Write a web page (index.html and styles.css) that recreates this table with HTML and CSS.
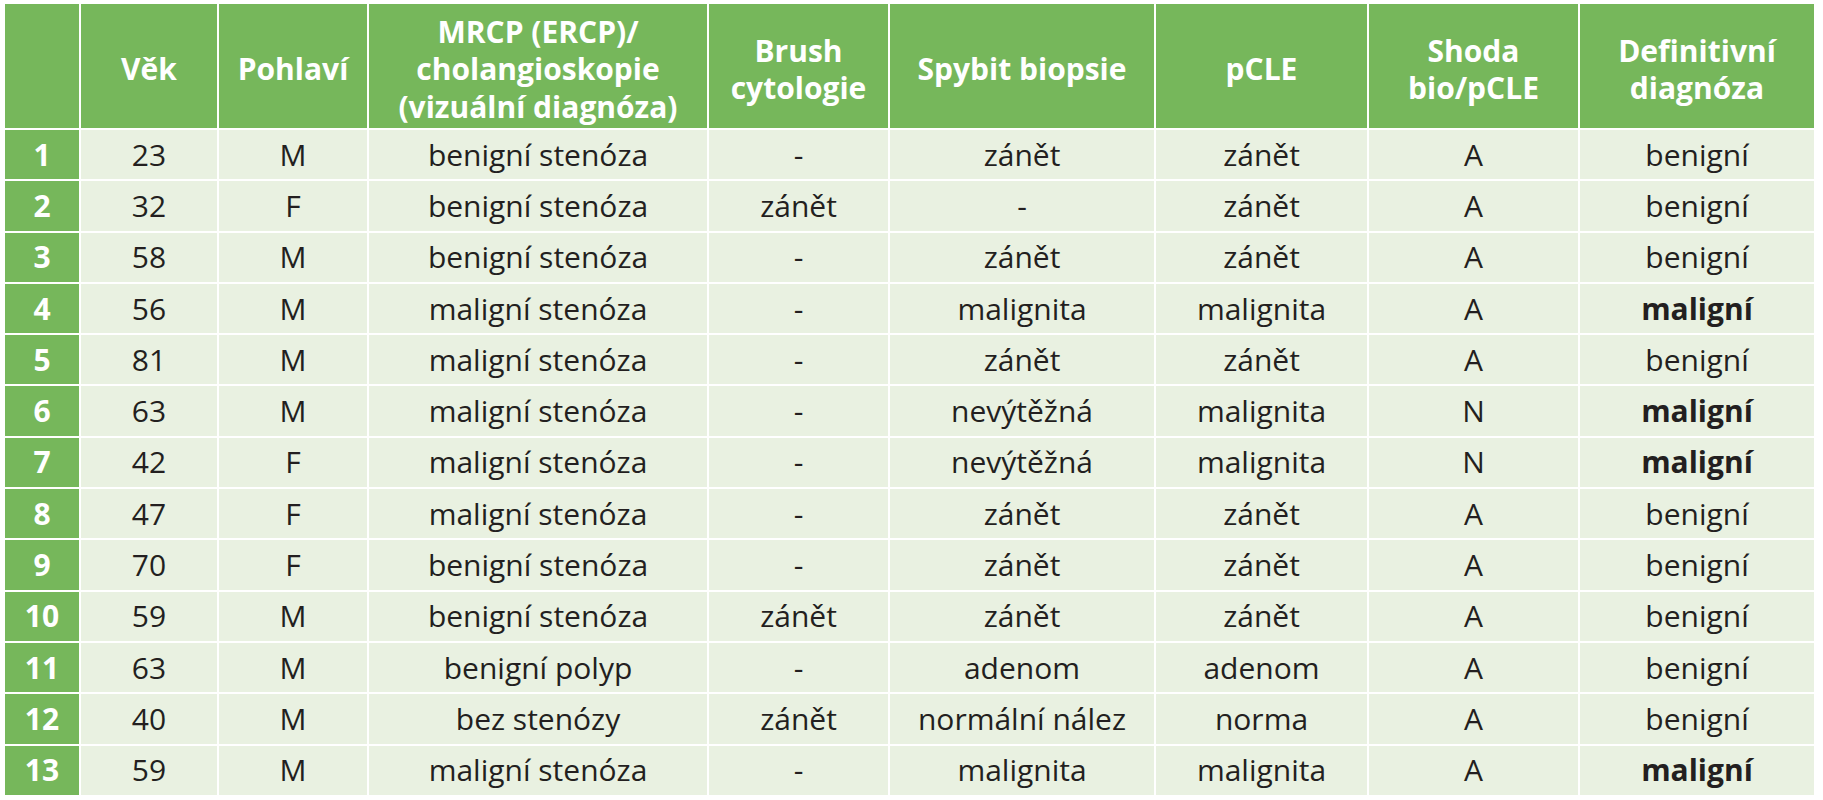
FILE: index.html
```html
<!DOCTYPE html>
<html lang="cs">
<head>
<meta charset="utf-8">
<title>Tabulka</title>
<link rel="stylesheet" href="styles.css">
</head>
<body>
<table class="data">
  <colgroup>
    <col class="c-num"><col class="c-age"><col class="c-sex"><col class="c-mrcp"><col class="c-brush"><col class="c-spy"><col class="c-pcle"><col class="c-shoda"><col class="c-def">
  </colgroup>
  <thead>
    <tr class="head">
      <th></th>
      <th>Věk</th>
      <th>Pohlaví</th>
      <th>MRCP (ERCP)/<br>cholangioskopie<br>(vizuální diagnóza)</th>
      <th>Brush<br>cytologie</th>
      <th>Spybit biopsie</th>
      <th>pCLE</th>
      <th>Shoda<br>bio/pCLE</th>
      <th>Definitivní<br>diagnóza</th>
    </tr>
  </thead>
  <tbody>
    <tr><td class="num">1</td><td>23</td><td>M</td><td>benigní stenóza</td><td>-</td><td>zánět</td><td>zánět</td><td>A</td><td>benigní</td></tr>
    <tr><td class="num">2</td><td>32</td><td>F</td><td>benigní stenóza</td><td>zánět</td><td>-</td><td>zánět</td><td>A</td><td>benigní</td></tr>
    <tr><td class="num">3</td><td>58</td><td>M</td><td>benigní stenóza</td><td>-</td><td>zánět</td><td>zánět</td><td>A</td><td>benigní</td></tr>
    <tr><td class="num">4</td><td>56</td><td>M</td><td>maligní stenóza</td><td>-</td><td>malignita</td><td>malignita</td><td>A</td><td class="strong">maligní</td></tr>
    <tr><td class="num">5</td><td>81</td><td>M</td><td>maligní stenóza</td><td>-</td><td>zánět</td><td>zánět</td><td>A</td><td>benigní</td></tr>
    <tr><td class="num">6</td><td>63</td><td>M</td><td>maligní stenóza</td><td>-</td><td>nevýtěžná</td><td>malignita</td><td>N</td><td class="strong">maligní</td></tr>
    <tr><td class="num">7</td><td>42</td><td>F</td><td>maligní stenóza</td><td>-</td><td>nevýtěžná</td><td>malignita</td><td>N</td><td class="strong">maligní</td></tr>
    <tr><td class="num">8</td><td>47</td><td>F</td><td>maligní stenóza</td><td>-</td><td>zánět</td><td>zánět</td><td>A</td><td>benigní</td></tr>
    <tr><td class="num">9</td><td>70</td><td>F</td><td>benigní stenóza</td><td>-</td><td>zánět</td><td>zánět</td><td>A</td><td>benigní</td></tr>
    <tr><td class="num">10</td><td>59</td><td>M</td><td>benigní stenóza</td><td>zánět</td><td>zánět</td><td>zánět</td><td>A</td><td>benigní</td></tr>
    <tr><td class="num">11</td><td>63</td><td>M</td><td>benigní polyp</td><td>-</td><td>adenom</td><td>adenom</td><td>A</td><td>benigní</td></tr>
    <tr><td class="num">12</td><td>40</td><td>M</td><td>bez stenózy</td><td>zánět</td><td>normální nález</td><td>norma</td><td>A</td><td>benigní</td></tr>
    <tr><td class="num">13</td><td>59</td><td>M</td><td>maligní stenóza</td><td>-</td><td>malignita</td><td>malignita</td><td>A</td><td class="strong">maligní</td></tr>
  </tbody>
</table>
</body>
</html>
```

FILE: styles.css
```css
html, body {
  margin: 0;
  padding: 0;
  background: #ffffff;
}

body {
  font-family: "Open Sans", "Noto Sans", sans-serif;
  color: #231f20;
}

.data {
  table-layout: fixed;
  border-collapse: separate;
  border-spacing: 2px;
  width: 1813px;
  margin: 2px 0 0 3px;
}

.c-num { width: 74px; }
.c-age { width: 136px; }
.c-sex { width: 148px; }
.c-mrcp { width: 338px; }
.c-brush { width: 179px; }
.c-spy { width: 264px; }
.c-pcle { width: 211px; }
.c-shoda { width: 209px; }
.c-def { width: 234px; }

.data th,
.data td {
  padding: 0;
  text-align: center;
  vertical-align: middle;
}

.head th {
  background: #76b75b;
  color: #ffffff;
  font-weight: 700;
  font-size: 30px;
  line-height: 37.5px;
  height: 124px;
  padding-top: 6px;
  box-sizing: border-box;
}

.data tbody td {
  background: #e9f1e1;
  font-size: 30px;
  line-height: 38px;
  height: 49.3px;
  box-sizing: border-box;
  white-space: nowrap;
}

.data tbody td.num {
  background: #76b75b;
  color: #ffffff;
  font-weight: 700;
}

.data tbody td.strong {
  font-weight: 700;
}
```
